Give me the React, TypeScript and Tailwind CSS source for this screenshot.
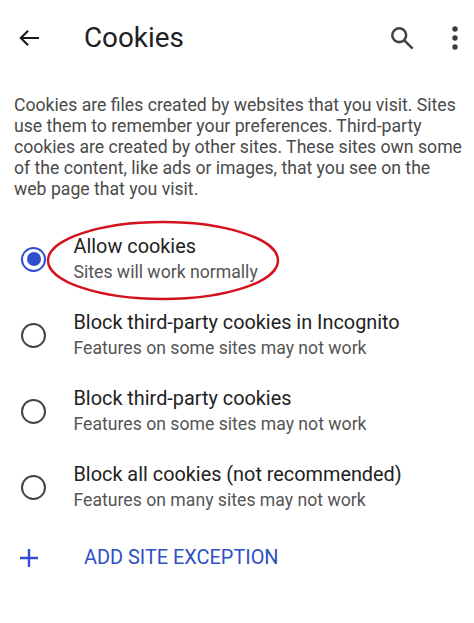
export default function App() {
  const rows = [
    ["Allow cookies", "Sites will work normally", true],
    ["Block third-party cookies in Incognito", "Features on some sites may not work", false],
    ["Block third-party cookies", "Features on some sites may not work", false],
    ["Block all cookies (not recommended)", "Features on many sites may not work", false],
  ] as const;
  return (
    <div className="relative w-[474px] h-[623px] bg-white overflow-hidden font-['Roboto',sans-serif]">
      <header className="flex items-center h-[75px] pl-[18px] pr-[15px]">
        <svg width="22" height="22" viewBox="0 0 24 24" className="shrink-0" fill="none" stroke="#1c1c1c" strokeWidth="2.3">
          <path d="M23 12H3M11 4 3 12l8 8" />
        </svg>
        <h1 className="ml-[44px] text-[27.8px] leading-none text-[#202124] flex-1">Cookies</h1>
        <svg width="24" height="24" viewBox="0 0 26 26" className="mr-[37px]" fill="none" stroke="#444" strokeWidth="2.8">
          <circle cx="10" cy="10" r="7.5" />
          <path d="m15.5 15.5 9 9" />
        </svg>
        <svg width="8" height="24" viewBox="0 0 8 24" fill="#3c3c3c">
          <circle cx="4" cy="3" r="2.7" />
          <circle cx="4" cy="12" r="2.7" />
          <circle cx="4" cy="21" r="2.7" />
        </svg>
      </header>
      <p className="mt-[20px] pl-[14px] pr-[10px] text-[17.65px] leading-[21px] text-[#4a4a4a]">
        Cookies are files created by websites that you visit. Sites use them to remember your preferences. Third-party cookies are created by other sites. These sites own some of the content, like ads or images, that you see on the web page that you visit.
      </p>
      <ul className="mt-[21px]">
        {rows.map(([title, sub, on]) => (
          <li key={title} className="flex items-center h-[76px] pl-[21px]">
            {on ? (
              <span className="flex items-center justify-center w-[25px] h-[25px] rounded-full border-[2.5px] border-[#2f4fd0]">
                <span className="w-[14px] h-[14px] rounded-full bg-[#2f4fd0]" />
              </span>
            ) : (
              <span className="w-[25px] h-[25px] rounded-full border-[2.5px] border-[#444444]" />
            )}
            <div className="ml-[27.5px]">
              <div className="text-[19.85px] leading-[26px] text-[#222222]">{title}</div>
              <div className="text-[17.65px] leading-[24px] text-[#555555]">{sub}</div>
            </div>
          </li>
        ))}
      </ul>
      <div className="flex items-center mt-[21px] pl-[20px] h-[24px]">
        <svg width="18" height="18" viewBox="0 0 18 18" fill="none" stroke="#2f4fd0" strokeWidth="2.4">
          <path d="M9 0v18M0 9h18" />
        </svg>
        <span className="ml-[46px] text-[19.9px] text-[#2f4fc4]">ADD SITE EXCEPTION</span>
      </div>
      <svg className="absolute left-[46px] top-[220px]" width="234" height="81" viewBox="0 0 234 81" fill="none" stroke="#d4121c" strokeWidth="2.4">
        <ellipse cx="117" cy="40.5" rx="115" ry="38.5" />
      </svg>
    </div>
  );
}
